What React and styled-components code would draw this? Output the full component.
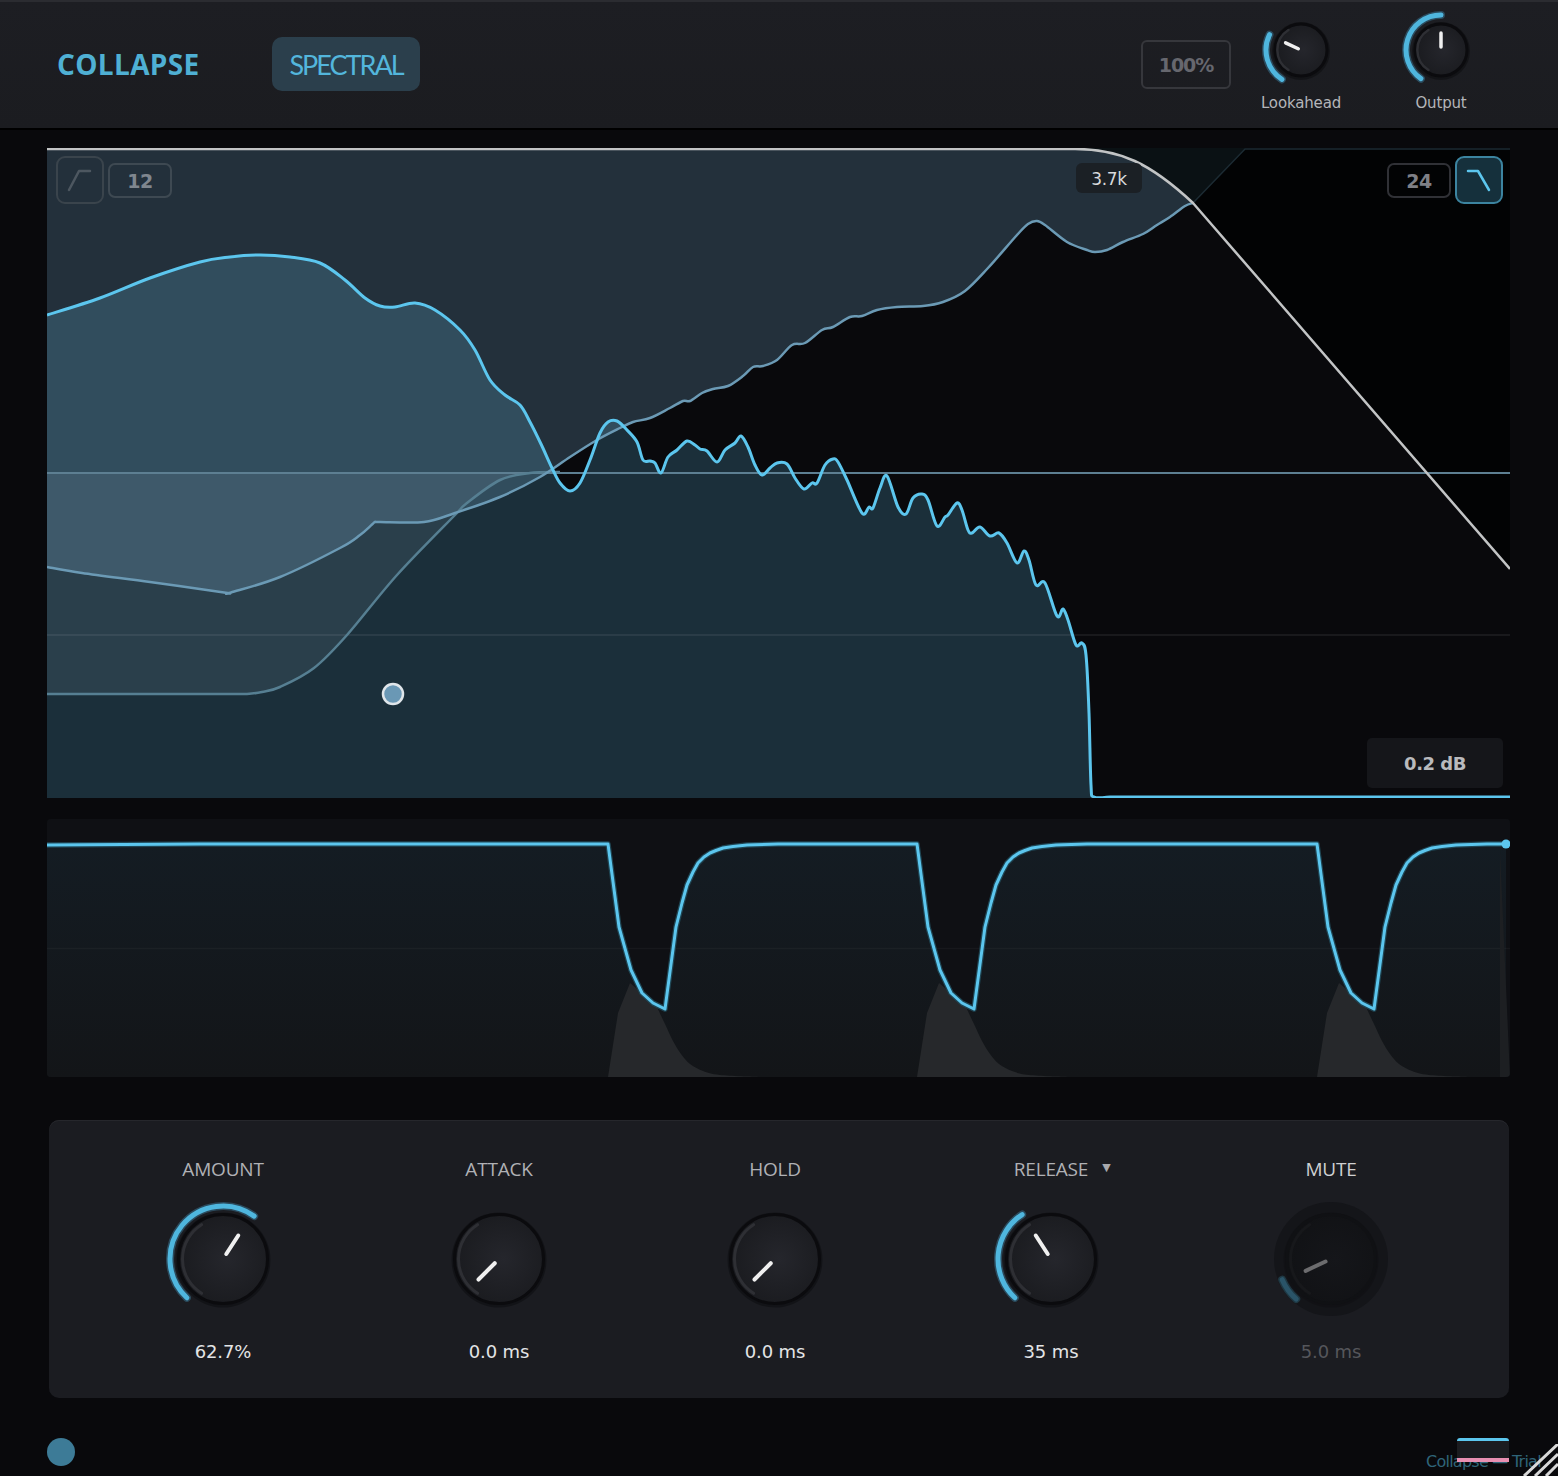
import React, { useId } from "react";
import styled, { createGlobalStyle } from "styled-components";

const GlobalStyle = createGlobalStyle`
  html, body { margin: 0; padding: 0; background: #09090c; }
  body { width: 1558px; height: 1476px; overflow: hidden; font-family: "Open Sans", "DejaVu Sans", sans-serif; }
  #root { width: 1558px; height: 1476px; }
`;

const BLUE = "#5cc6ee";

const Page = styled.div`
  width: 1558px; height: 1476px; display: flex; flex-direction: column;
  background: #09090c; overflow: hidden; position: relative;
`;
const Header = styled.header`
  height: 124px; flex: none; display: flex; align-items: center; padding: 0 47px 2px 57px;
  background: linear-gradient(#1d1e23, #1b1c20); border-top: 2px solid #2b2c31; border-bottom: 2px solid #000;
`;
const Brand = styled.div`
  font: 700 28px "Open Sans", sans-serif; letter-spacing: 0.35px; color: #4fb0d4; width: 215px; flex: none;
`;
const ModeButton = styled.div`
  width: 148px; height: 54px; display: flex; align-items: center; justify-content: center; border-radius: 10px;
  background: #2b3f4c; color: #53b6dc; font: 400 27px "Lato", sans-serif; letter-spacing: -2px;
`;
const Spacer = styled.div`flex: 1;`;
const PercentButton = styled.div`
  width: 86px; height: 44px; padding-top: 1px; box-sizing: content-box; display: flex; align-items: center; justify-content: center; border-radius: 6px;
  border: 2px solid #36373c; color: #66676e; font: 700 19px "DejaVu Sans", sans-serif; letter-spacing: -1.1px;
`;
const HeaderKnob = styled.div`
  width: 140px; display: flex; flex-direction: column; align-items: center; align-self: flex-start; padding-top: 6px;
`;
const HeaderKnobLabel = styled.div`
  font: 400 15px "DejaVu Sans", sans-serif; color: #b4b5b9; line-height: 20px; margin-top: 1px; letter-spacing: -0.15px;
`;
const Main = styled.main`
  flex: none; display: flex; flex-direction: column; padding: 18px 48px 0 47px;
`;
const SpectrumBox = styled.section`
  position: relative; width: 1463px; height: 650px; background: #09090c;
`;
const Chart = styled.svg`display: block;`;
const Toolbar = styled.div`
  position: absolute; top: 8px; display: flex; align-items: center; gap: 4px;
  ${(p) => (p.$side === "left" ? "left: 9px;" : "right: 7px;")}
`;
const Slope = styled.div`
  width: 44px; height: 44px; border-radius: 9px; display: flex; align-items: center; justify-content: center;
  border: 2px solid ${(p) => (p.$active ? "#3c84a0" : "#3a444c")}; background: ${(p) => (p.$active ? "#15303c" : "transparent")};
`;
const SlopeValue = styled.div`
  width: 60px; height: 30px; padding-top: 1px; border-radius: 7px; display: flex; align-items: center; justify-content: center;
  border: 2px solid ${(p) => (p.$dark ? "#303136" : "#3e4952")};
  color: ${(p) => (p.$dark ? "#7f8086" : "#7f868e")}; font: 700 19px "DejaVu Sans", sans-serif; letter-spacing: -0.4px;
`;
const FreqTag = styled.div`
  position: absolute; left: 1029px; top: 15px; width: 66px; height: 29px; padding-top: 1px; border-radius: 6px;
  background: #1b2025; color: #d8d9db; font: 400 17px "DejaVu Sans", sans-serif; letter-spacing: -0.4px;
  display: flex; align-items: center; justify-content: center;
`;
const GainTag = styled.div`
  position: absolute; left: 1320px; top: 590px; width: 136px; height: 50px; border-radius: 5px;
  background: #15161a; color: #b9babd; font: 700 18px "DejaVu Sans", sans-serif; letter-spacing: -0.5px;
  display: flex; align-items: center; justify-content: center;
`;
const TimelineBox = styled.section`
  margin-top: 21px; width: 1463px; height: 258px; border-radius: 4px; overflow: hidden; background: #0f1014;
`;
const ControlPanel = styled.section`
  margin: 43px 0 0 2px; width: 1460px; height: 278px; box-sizing: border-box; display: flex; padding: 38px 0 0 36px;
  border-radius: 10px; background: #1b1c21; box-shadow: inset 0 1px 0 #26272c;
`;
const Control = styled.div`
  width: ${(p) => (p.$wide ? 284 : 276)}px; flex: none; display: flex; flex-direction: column; align-items: center;
`;
const ControlLabel = styled.div`
  font: 400 19px/22px "Open Sans", sans-serif; letter-spacing: -0.2px; position: relative; height: 22px;
  color: ${(p) => (p.$bright ? "#cfd0d2" : "#b0b1b5")};
`;
const Caret = styled.span`
  position: absolute; left: calc(100% + 14px); top: -1px; font-size: 11px; color: #a8a9ad; font-family: "DejaVu Sans", sans-serif;
`;
const KnobSlot = styled.div`margin-top: 19px; height: 120px;`;
const ControlValue = styled.div`
  margin-top: 22px; font: 400 18px/22px "DejaVu Sans", sans-serif; letter-spacing: -0.1px;
  color: ${(p) => (p.$dim ? "#55565b" : "#e3e4e6")};
`;
const Footer = styled.footer`
  flex: 1; position: relative;
`;
const PowerDot = styled.div`
  position: absolute; left: 47px; top: 40px; width: 28px; height: 28px; border-radius: 50%; background: #3d7b97;
`;
const TrialText = styled.div`
  position: absolute; left: 1426px; top: 52px; font: 400 16px/24px "DejaVu Sans", sans-serif; color: #2f6479; white-space: nowrap; letter-spacing: -0.75px;
`;
const Bands = styled.div`
  position: absolute; left: 1457px; top: 40px; width: 52px; height: 24px; box-sizing: border-box; background: #1b1c20;
  border-top: 3px solid ${BLUE}; border-bottom: 4px solid #e88fb2; border-radius: 3px 3px 0 0;
`;
const ResizeGrip = styled.svg`position: absolute; right: 0; bottom: 0;`;

function pol(cx, cy, r, deg) {
  const a = (deg * Math.PI) / 180;
  return [cx + r * Math.sin(a), cy - r * Math.cos(a)];
}
function arc(cx, cy, r, from, to) {
  const [x0, y0] = pol(cx, cy, r, from);
  const [x1, y1] = pol(cx, cy, r, to);
  return `M${x0.toFixed(2)} ${y0.toFixed(2)}A${r} ${r} 0 ${to - from > 180 ? 1 : 0} 1 ${x1.toFixed(2)} ${y1.toFixed(2)}`;
}
function Knob({ box, r, arcR, from, to, angle, needle, muted, halo, sw = 5 }) {
  const id = useId().replace(/[^a-z0-9]/gi, "");
  const c = box / 2;
  const [nx0, ny0] = pol(c, c, needle[0], angle);
  const [nx1, ny1] = pol(c, c, needle[1], angle);
  return (
    <Chart width={box} height={box} viewBox={`0 0 ${box} ${box}`}>
      <defs>
        <radialGradient id={id} cx="55%" cy="50%" r="55%">
          <stop offset="0" stopColor={muted ? "#15161a" : "#25262c"} />
          <stop offset="1" stopColor={muted ? "#111215" : "#1a1b1f"} />
        </radialGradient>
      </defs>
      {halo && <circle cx={c} cy={c} r={halo} fill="#141519" />}
      <circle cx={c} cy={c + 1} r={r + 3} fill="#000" opacity={muted ? 0.15 : 0.3} />
      <circle cx={c} cy={c} r={r} fill={`url(#${id})`} stroke={muted ? "#101114" : "#0b0b0e"} strokeWidth="3" />
      <path d={arc(c, c, r * 0.91, -148, -32)} fill="none" stroke={muted ? "#17181b" : "#2e2f34"} strokeWidth={r > 40 ? 3 : 2.5} strokeLinecap="round" />
      {from !== undefined && <path d={arc(c, c, arcR, from, to)} fill="none" stroke={muted ? "#1f3843" : "#2b4a5c"} strokeWidth={sw + 3} strokeLinecap="round" />}
      {from !== undefined && <path d={arc(c, c, arcR, from, to)} fill="none" stroke={muted ? "#2a5468" : "#4fb6de"} strokeWidth={sw} strokeLinecap="round" />}
      <line x1={nx0} y1={ny0} x2={nx1} y2={ny1} stroke={muted ? "#6c6c6e" : "#f0f0f0"} strokeWidth={r > 40 ? 4 : 3.5} strokeLinecap="round" />
    </Chart>
  );
}

function smooth(pts, move = true) {
  let d = move ? `M${pts[0][0]} ${pts[0][1]}` : `L${pts[0][0]} ${pts[0][1]}`;
  for (let i = 0; i < pts.length - 1; i++) {
    const p0 = pts[i - 1] || pts[i], p1 = pts[i], p2 = pts[i + 1], p3 = pts[i + 2] || p2;
    const c1 = [p1[0] + (p2[0] - p0[0]) / 6, p1[1] + (p2[1] - p0[1]) / 6];
    const c2 = [p2[0] - (p3[0] - p1[0]) / 6, p2[1] - (p3[1] - p1[1]) / 6];
    d += `C${c1[0].toFixed(1)} ${c1[1].toFixed(1)} ${c2[0].toFixed(1)} ${c2[1].toFixed(1)} ${p2[0]} ${p2[1]}`;
  }
  return d;
}

const spectrum = [[47,315],[100,298],[150,278],[200,262],[230,257],[260,255],[290,257],[320,263],[345,280],[365,298],[380,306],[395,307],[415,303],[435,310],[460,330],[475,350],[490,380],[505,395],[520,405],[530,422],[541,444],[552,468],[560,483],[570,491],[580,483],[590,460],[600,433],[608,422],[617,421],[627,430],[637,442],[643,460],[650,461],[655,463],[661,473],[668,457],[677,450],[687,441],[695,445],[700,449],[707,451],[717,462],[725,450],[735,443],[741,436],[748,447],[755,465],[762,475],[770,468],[777,463],[787,464],[795,478],[804,489],[812,483],[817,483],[825,465],[833,459],[838,462],[847,480],[862,513],[869,507],[873,508],[880,488],[887,476],[898,507],[906,514],[913,498],[922,494],[928,500],[937,526],[945,517],[948,515],[957,503],[962,510],[968,530],[972,533],[980,527],[990,536],[999,533],[1007,543],[1017,563],[1024,551],[1029,560],[1036,585],[1045,583],[1057,616],[1063,609],[1068,620],[1076,645],[1082,643],[1086,655],[1089,713],[1091,785],[1094,797],[1110,797]];
const threshold = [[47,567],[82,573],[150,582],[224,592.5],[227,593],[231,592.5],[280,577],[340,548],[360,535],[372,524.5],[375,522],[380,522],[424,522],[455,513],[500,497],[540,477],[570,457],[597,440],[620,428],[633,422],[650,418],[670,408],[683,401],[690,401],[702,393],[713,389],[728,386],[743,376],[753,367],[763,366],[777,360],[792,345],[805,343],[822,330],[833,327],[850,317],[862,316],[877,310],[897,307],[923,306],[943,302],[965,291],[988,268],[1017,235],[1028,224],[1037,221],[1045,225],[1067,242],[1087,250],[1095,252],[1107,250],[1123,242],[1143,234],[1157,225],[1170,217],[1185,206],[1193,203]];
const lower = [[47,694],[150,694],[230,694],[247,694],[262,692],[280,687],[314,668],[347,635],[397,575],[455,515],[467,503],[500,480],[530,473],[560,472]];
const ceilingCurve = "H1075C1120 149 1150 163 1193 203";

const spectrumLine = smooth(spectrum);
const thresholdLine = smooth(threshold);
const lowerLine = smooth(lower);

function dipPoints(x, rise) {
  return [[x,844],[x+11,927],[x+23,970],[x+34,993],[x+45,1003],[x+57,1009],[x+68,927],[x+74,903],[x+79,885],[x+85,872],[x+90,863],[x+96,857],[x+102,853],[x+108,850.5],[x+115,848],[x+125,846.5],[x+139,845],[x+170,844]].concat(rise ? [[rise,844]] : []);
}
const gainPts = [[47,845],[200,844],[608,844],...dipPoints(608,917),...dipPoints(917,1317).slice(1),...dipPoints(1317).slice(1).filter(p=>p[0]<=1490),[1506,844]];
const gainLine = "M" + gainPts.map((p) => p.join(" ")).join("L");
const hump = (x) => `M${x} 1077L${x+10} 1013L${x+22} 983L${x+34} 993L${x+45} 1003L${x+49} 1007` +
  smooth([[x+49,1007],[x+57,1024],[x+65,1041],[x+73,1054],[x+82,1064],[x+95,1071],[x+112,1075],[x+152,1077]], false) + "Z";

function SpectrumChart() {
  return (
    <Chart width="1463" height="650" viewBox="47 148 1463 650">
      <rect x="47" y="148" width="1463" height="650" fill="#09090c" />
      <path d="M1193 203L1245 148H1510V569Z" fill="#020304" />
      <path d="M1075 148H1245L1193 203C1150 163 1120 149 1075 149Z" fill="#0a1114" />
      <path d={`${spectrumLine}L1094 798L47 798Z`} fill="#1b2f3a" />
      <path d={`M47 149${ceilingCurve}${smooth([...threshold].reverse(), false)}Z`} fill="rgba(117,169,200,.25)" />
      <path d={`${lowerLine}L47 472Z`} fill="rgba(160,180,208,.12)" />
      <line x1="47" x2="1510" y1="635" y2="635" stroke="rgba(255,255,255,.09)" strokeWidth="1.5" />
      <line x1="47" x2="1510" y1="473" y2="473" stroke="#5d7f92" strokeWidth="2" />
      <path d={lowerLine} fill="none" stroke="#567f92" strokeWidth="2.5" />
      <path d={thresholdLine} fill="none" stroke="#6b9ab5" strokeWidth="2.5" />
      <path d="M1193 203L1245 149H1510" fill="none" stroke="#1c2b33" strokeWidth="1.5" />
      <path d={`M47 149${ceilingCurve}L1510 569`} fill="none" stroke="#c2c4c5" strokeWidth="2.5" />
      <path d={`${spectrumLine}L1510 797`} fill="none" stroke={BLUE} strokeWidth="3" />
      <circle cx="393" cy="694" r="10" fill="#6a98b5" stroke="#e0e6ea" strokeWidth="2.5" />
    </Chart>
  );
}

function TimelineChart() {
  return (
    <Chart width="1463" height="258" viewBox="47 819 1463 258">
      <defs>
        <linearGradient id="under" x1="0" y1="0" x2="0" y2="1">
          <stop offset="0" stopColor="#141c23" />
          <stop offset="1" stopColor="#131518" />
        </linearGradient>
      </defs>
      <rect x="47" y="819" width="1463" height="258" fill="#0f1014" />
      <path d={`${gainLine}L1506 1077L47 1077Z`} fill="url(#under)" />
      <line x1="47" x2="1510" y1="948.5" y2="948.5" stroke="rgba(255,255,255,.035)" strokeWidth="1.5" />
      <path d={`${hump(608)}${hump(917)}${hump(1317)}`} fill="#26282b" />
      <path d="M1500 850L1510 1077H1500Z" fill="#1d1f22" />
      <path d={gainLine} fill="none" stroke="#1f4553" strokeWidth="5.5" strokeLinejoin="round" />
      <path d={gainLine} fill="none" stroke={BLUE} strokeWidth="3" strokeLinejoin="round" />
      <circle cx="1506" cy="844" r="4.5" fill={BLUE} />
    </Chart>
  );
}

function SlopeIcon({ flip, color }) {
  return (
    <Chart width="26" height="24" viewBox="0 0 26 24">
      <polyline points={flip ? "2,3 12,3 23,22" : "2,22 12,3 23,3"} fill="none" stroke={color} strokeWidth="2.5" strokeLinecap="round" strokeLinejoin="round" />
    </Chart>
  );
}

const controls = [
  { label: "AMOUNT", value: "62.7%", knob: { from: -137, to: 36, angle: 33, needle: [6, 28] } },
  { label: "ATTACK", value: "0.0 ms", knob: { angle: -135, needle: [6, 29] } },
  { label: "HOLD", value: "0.0 ms", knob: { angle: -135, needle: [6, 29] } },
  { label: "RELEASE", value: "35 ms", caret: true, knob: { from: -137, to: -33, angle: -33, needle: [6, 28] } },
  { label: "MUTE", value: "5.0 ms", bright: true, dim: true, wide: true, knob: { from: -139, to: -113, angle: -115, needle: [6, 28], muted: true, halo: 57 } },
];

export default function App() {
  return (
    <Page>
      <GlobalStyle />
      <Header>
        <Brand>COLLAPSE</Brand>
        <ModeButton>SPECTRAL</ModeButton>
        <Spacer />
        <PercentButton>100%</PercentButton>
        <HeaderKnob>
          <Knob box={84} r={26} arcR={35} from={-147} to={-64} angle={-65} needle={[3, 17]} />
          <HeaderKnobLabel>Lookahead</HeaderKnobLabel>
        </HeaderKnob>
        <HeaderKnob>
          <Knob box={84} r={26} arcR={35} from={-145} to={0} angle={0} needle={[3, 17]} />
          <HeaderKnobLabel>Output</HeaderKnobLabel>
        </HeaderKnob>
      </Header>
      <Main>
        <SpectrumBox>
          <SpectrumChart />
          <Toolbar $side="left">
            <Slope><SlopeIcon color="#4d5760" /></Slope>
            <SlopeValue>12</SlopeValue>
          </Toolbar>
          <Toolbar $side="right">
            <SlopeValue $dark>24</SlopeValue>
            <Slope $active><SlopeIcon flip color={BLUE} /></Slope>
          </Toolbar>
          <FreqTag>3.7k</FreqTag>
          <GainTag>0.2 dB</GainTag>
        </SpectrumBox>
        <TimelineBox><TimelineChart /></TimelineBox>
        <ControlPanel>
          {controls.map((c) => (
            <Control key={c.label} $wide={c.wide}>
              <ControlLabel $bright={c.bright}>
                {c.label}
                {c.caret && <Caret>▼</Caret>}
              </ControlLabel>
              <KnobSlot>
                <Knob box={120} r={44.5} arcR={53} {...c.knob} />
              </KnobSlot>
              <ControlValue $dim={c.dim}>{c.value}</ControlValue>
            </Control>
          ))}
        </ControlPanel>
      </Main>
      <Footer>
        <PowerDot />
        <TrialText>Collapse — Trial</TrialText>
        <Bands />
        <ResizeGrip width="36" height="32" viewBox="0 0 36 32">
          <path d="M2 32L36 0M13 32L36 10M24 32L36 20" stroke="#d8d8d8" strokeWidth="3" />
        </ResizeGrip>
      </Footer>
    </Page>
  );
}
